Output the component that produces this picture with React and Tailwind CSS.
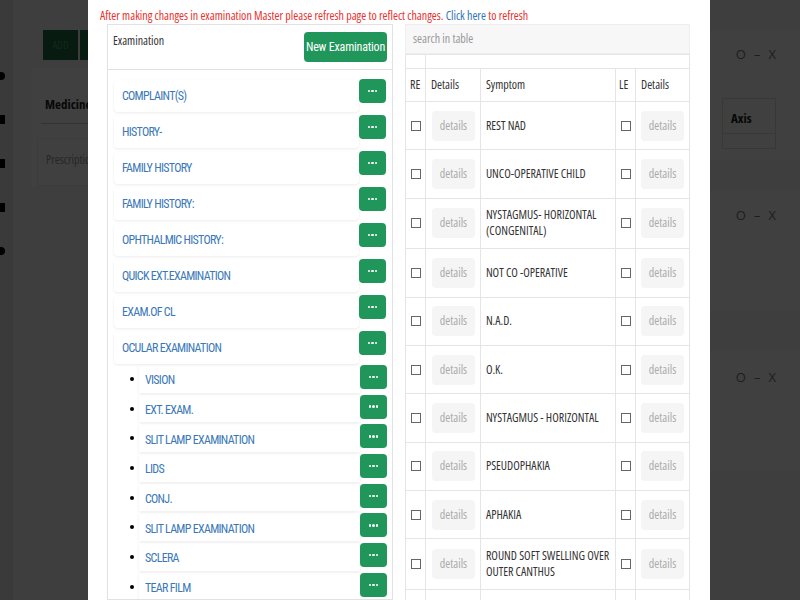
import React from "react";

const topItems = [
  "COMPLAINT(S)",
  "HISTORY-",
  "FAMILY HISTORY",
  "FAMILY HISTORY:",
  "OPHTHALMIC HISTORY:",
  "QUICK EXT.EXAMINATION",
  "EXAM.OF CL",
  "OCULAR EXAMINATION",
];

const subItems = [
  "VISION",
  "EXT. EXAM.",
  "SLIT LAMP EXAMINATION",
  "LIDS",
  "CONJ.",
  "SLIT LAMP EXAMINATION",
  "SCLERA",
  "TEAR FILM",
];

const symptoms = [
  "REST NAD",
  "UNCO-OPERATIVE CHILD",
  "NYSTAGMUS- HORIZONTAL\n(CONGENITAL)",
  "NOT CO -OPERATIVE",
  "N.A.D.",
  "O.K.",
  "NYSTAGMUS - HORIZONTAL",
  "PSEUDOPHAKIA",
  "APHAKIA",
  "ROUND SOFT SWELLING OVER\nOUTER CANTHUS",
];

const narrow = { fontFamily: 'Roboto, "Liberation Sans", sans-serif' };
const open = { fontFamily: '"Open Sans", "Liberation Sans", sans-serif' };

const MoreBtn = ({ className }) => (
  <button
    className={`flex h-6 w-[27px] shrink-0 items-center justify-center gap-px rounded-sm bg-[#21965a] ${className}`}
  >
    <span className="h-[2.5px] w-[2.5px] rounded-full bg-white" />
    <span className="h-[2.5px] w-[2.5px] rounded-full bg-white" />
    <span className="h-[2.5px] w-[2.5px] rounded-full bg-white" />
  </button>
);

const Checkbox = () => <span className="block h-[10px] w-[10px] border border-[#666] bg-white" />;

const DetailsBtn = () => (
  <span className="flex h-[30px] w-[43px] items-center justify-center rounded-sm bg-[#f5f5f5] text-[12px] text-[#aaa]">
    details
  </span>
);

const Controls = () => (
  <div className="flex justify-end gap-[8px] pr-[24px] text-[13px] text-[#777] font-stretch-normal">
    <span>O</span>
    <span>–</span>
    <span>X</span>
  </div>
);

export default function App() {
  return (
    <div className="relative h-[600px] w-[800px] overflow-hidden bg-[#f6f6f6] font-stretch-condensed" style={open}>
      {/* page behind the modal */}
      <div className="flex h-full">
        <aside className="flex w-[13px] flex-col gap-[35px] bg-[#e6e6e6] pt-[72px]">
          <span className="ml-[-3px] h-[8px] w-[8px] rounded-full bg-black" />
          <span className="ml-[-3px] h-[9px] w-[8px] bg-black" />
          <span className="ml-[-3px] h-[9px] w-[8px] bg-black" />
          <span className="ml-[-3px] h-[9px] w-[8px] bg-black" />
          <span className="ml-[-3px] h-[8px] w-[8px] rounded-full bg-black" />
        </aside>
        <main className="flex flex-1 pl-[18px] pt-[30px]">
          <div className="flex-1">
            <div className="flex gap-[2px] pl-[12px]">
              <span className="flex h-[30px] w-[35px] items-center justify-center bg-[#1c6b45] text-[11px] text-[#4c9a74]">
                ADD
              </span>
              <span className="h-[30px] w-[35px] bg-[#1c6b45]" />
            </div>
            <div className="mt-[8px] bg-white pl-[10px] pt-[27px]">
              <div className="border-b border-[#ccc] pb-[8px] pl-[4px] text-[13px] font-bold text-[#222]">
                Medicine
              </div>
              <div className="mt-[14px] ml-[-4px] h-[48px] w-[600px] border border-[#eee] pl-[8px] pt-[12px] text-[12px] text-[#999]">
                Prescription
              </div>
            </div>
          </div>
          <div className="flex w-[90px] flex-col">
            <div className="h-[130px] bg-white pt-[15px]">
              <Controls />
              <div className="ml-[12px] mt-[33px] w-[54px] border border-[#ddd]">
                <div className="h-[35px] border-b border-[#ddd] pl-[8px] pt-[10px] text-[13px] font-bold text-[#222]">
                  Axis
                </div>
                <div className="h-[14px]" />
              </div>
            </div>
            <div className="mt-[30px] h-[120px] bg-white pt-[16px]">
              <Controls />
            </div>
            <div className="mt-[40px] h-[120px] bg-white pt-[18px]">
              <Controls />
            </div>
          </div>
        </main>
      </div>

      <div className="absolute inset-0 bg-black/75" />

      {/* modal */}
      <div className="absolute left-[88px] top-0 flex h-full w-[622px] flex-col bg-white">
        <p className="px-[12px] pt-[7px] text-[12px] leading-[17px] text-[#e8302e]">
          After making changes in examination Master please refresh page to reflect changes.{" "}
          <span className="text-[#2f74b5]">Click here</span> to refresh
        </p>
        <div className="flex min-h-0 flex-1 gap-[12px] pl-[19px] pr-[20px]">
          {/* left panel */}
          <div className="w-[286px] shrink-0 overflow-hidden border border-[#e2e2e2]">
            <div className="flex items-start justify-between border-b border-[#e2e2e2] pb-[7px] pl-[5px] pr-[5px] pt-[7px]">
              <span className="text-[12px] text-[#333]">Examination</span>
              <button
                className="h-[30px] w-[83px] rounded-sm bg-[#21965a] text-[12px] tracking-[-0.2px] text-white font-stretch-condensed"
                style={narrow}
              >
                New Examination
              </button>
            </div>
            <div className="flex flex-col gap-[4px] pl-[6px] pr-[6px] pt-[10px] font-stretch-condensed" style={narrow}>
              {topItems.map((item) => (
                <div key={item} className="flex items-start">
                  <div className="flex h-[32px] flex-1 items-center rounded-sm pl-[8px] text-[12px] tracking-[-0.7px] text-[#3a78b8] shadow-[0_1px_3px_rgba(0,0,0,0.08)]">
                    {item}
                  </div>
                  <MoreBtn className="mt-[-1px]" />
                </div>
              ))}
            </div>
            <div className="mt-[1px] flex flex-col gap-[2px] pl-[22px] pr-[5px] font-stretch-condensed" style={narrow}>
              {subItems.map((item, i) => (
                <div key={i} className="flex items-start">
                  <span className="mt-[12px] h-[4px] w-[4px] shrink-0 rounded-full bg-black" />
                  <div className="ml-[5px] flex h-[27.7px] flex-1 items-center pl-[6px] pt-[3px] text-[12px] tracking-[-0.7px] text-[#3a78b8] shadow-[0_1px_3px_rgba(0,0,0,0.08)]">
                    {item}
                  </div>
                  <MoreBtn className="" />
                </div>
              ))}
            </div>
          </div>

          {/* right panel */}
          <div className="w-[285px] shrink-0 overflow-hidden">
            <div className="flex h-[30px] items-center border border-[#eee] bg-[#f7f7f7] pl-[7px] text-[12px] text-[#999]">
              search in table
            </div>
            <table className="w-full border-collapse text-[12px] text-[#333]">
              <colgroup>
                <col className="w-[20px]" />
                <col className="w-[55px]" />
                <col className="w-[136px]" />
                <col className="w-[20px]" />
                <col className="w-[54px]" />
              </colgroup>
              <thead>
                <tr className="h-[14px]">
                  <th className="border border-[#e5e5e5] p-0" />
                  <th colSpan={4} className="border border-[#e5e5e5] p-0" />
                </tr>
                <tr className="h-[33px] text-left font-normal">
                  <th className="border border-[#e5e5e5] pl-[4px] font-normal">RE</th>
                  <th className="border border-[#e5e5e5] pl-[5px] font-normal">Details</th>
                  <th className="border border-[#e5e5e5] pl-[5px] font-normal">Symptom</th>
                  <th className="border border-[#e5e5e5] pl-[3px] font-normal">LE</th>
                  <th className="border border-[#e5e5e5] pl-[5px] font-normal">Details</th>
                </tr>
              </thead>
              <tbody>
                {symptoms.map((s, i) => (
                  <tr key={i}>
                    <td className="border border-[#e5e5e5] py-[8.7px] pl-[5px]">
                      <Checkbox />
                    </td>
                    <td className="border border-[#e5e5e5] py-[8.7px] pl-[6px]">
                      <DetailsBtn />
                    </td>
                    <td className="whitespace-pre-line border border-[#e5e5e5] py-[8.7px] pl-[5px] leading-[16px]">
                      {s}
                    </td>
                    <td className="border border-[#e5e5e5] py-[8.7px] pl-[5px]">
                      <Checkbox />
                    </td>
                    <td className="border border-[#e5e5e5] py-[8.7px] pl-[5px]">
                      <DetailsBtn />
                    </td>
                  </tr>
                ))}
                <tr className="h-[48px]">
                  <td className="border border-[#e5e5e5]" />
                  <td className="border border-[#e5e5e5]" />
                  <td className="border border-[#e5e5e5]" />
                  <td className="border border-[#e5e5e5]" />
                  <td className="border border-[#e5e5e5]" />
                </tr>
              </tbody>
            </table>
          </div>
        </div>
      </div>
    </div>
  );
}
